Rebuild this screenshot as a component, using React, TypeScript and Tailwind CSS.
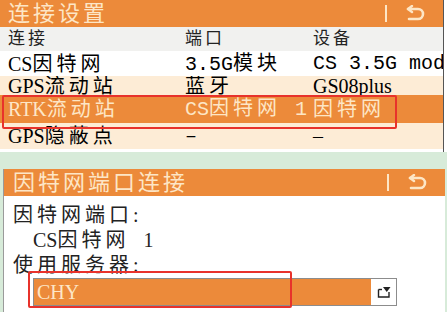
import React from "react";

const serif = "font-['Liberation_Serif','Noto_Sans_CJK_SC',serif]";
const mono = "font-['Liberation_Mono','Noto_Sans_CJK_SC',monospace]";

// splits a label into CJK / latin runs so the CJK glyphs get the wide pitch of the device font
function Mix({ s, m }: { s: string; m?: boolean }) {
  const parts = s.split(/([\u3000-\u9fff\uff00-\uffef]+|\s+)/).filter(Boolean);
  return (
    <>
      {parts.map((p, i) => {
        if (/^\s+$/.test(p)) return <span key={i} className="inline-block w-[0.7em]" />;
        if (/[\u3000-\u9fff\uff00-\uffef]/.test(p))
          return (
            <span key={i} className="tracking-[0.2em]">
              {p}
            </span>
          );
        return (
          <span key={i} className={m ? mono : ""}>
            {p}
          </span>
        );
      })}
    </>
  );
}

function ReturnIcon() {
  return (
    <svg width="22" height="18" viewBox="0 0 22 18" fill="none">
      <path d="M4 4 H14 a5 5 0 0 1 0 10 H5" stroke="#fde6c6" strokeWidth="2.6" strokeLinecap="round" />
      <path d="M8 1 L4 4 L8 7" stroke="#fde6c6" strokeWidth="2.4" strokeLinecap="round" strokeLinejoin="round" />
    </svg>
  );
}

function TitleBar({ title, pad }: { title: string; pad: string }) {
  return (
    <div className={`flex items-center h-[27px] bg-[#ec8a3a] ${pad}`}>
      <span className="flex-1 text-[22px] leading-none tracking-[3px] text-[#fde6c6]">{title}</span>
      <div className="w-[2px] h-[17px] bg-[#fde6c6]" />
      <div className="w-[56px] flex justify-center">
        <ReturnIcon />
      </div>
    </div>
  );
}

const rows = [
  { a: "CS因特网", b: "3.5G模块", c: "CS 3.5G mod", bg: "bg-white", h: "h-[25px]" },
  { a: "GPS流动站", b: "蓝牙", c: "GS08plus", bg: "bg-[#fdecd6]", h: "h-[19px]" },
  { a: "RTK流动站", b: "CS因特网 1", c: "因特网", bg: "bg-[#ec8a3a] text-[#fde6c6]", h: "h-[28px]" },
  { a: "GPS隐蔽点", b: "–", c: "–", bg: "bg-[#fdecd6]", h: "h-[26px]" },
];

export default function App() {
  return (
    <div className={`relative w-[447px] h-[312px] overflow-hidden bg-[#d7ebd9] ${serif}`}>
      {/* connection settings */}
      <div className="w-[447px] bg-white">
        <div className="w-[444px] border-r border-[#555]">
          <TitleBar title="连接设置" pad="pl-[8px]" />
          <div className="flex items-center h-[24px] bg-[#f1f1ef] text-[17px] tracking-[3px] text-[#222]">
            <span className="w-[185px] pl-[8px]">连接</span>
            <span className="w-[128px]">端口</span>
            <span>设备</span>
          </div>
          {rows.map((r) => (
            <div
              key={r.a}
              className={`flex items-center ${r.h} ${r.bg} text-[20px] leading-none whitespace-nowrap overflow-hidden`}
            >
              <span className="w-[185px] shrink-0 pl-[8px]">
                <Mix s={r.a} />
              </span>
              <span className="w-[128px] shrink-0">
                <Mix s={r.b} m />
              </span>
              <span className={r.c.startsWith("CS ") ? `${mono} whitespace-pre` : ""}>
                {r.c.startsWith("CS ") ? r.c : <Mix s={r.c} />}
              </span>
            </div>
          ))}
          <div className="h-[3px] bg-white" />
        </div>
      </div>

      {/* red highlight on the RTK row */}
      <div className="absolute left-[2px] top-[95px] w-[395px] h-[34px] border-2 border-[#e8322b] rounded-[2px]" />

      {/* internet port connection */}
      <div className="mt-[17px] ml-[3px] w-[442px] h-[200px] bg-white border-l border-[#9a9a9a]">
        <TitleBar title="因特网端口连接" pad="pl-[9px]" />
        <div className="flex flex-col pl-[9px] pt-[6px] text-[20px] text-[#222] leading-none">
          <span className="h-[25px] flex items-center">
            <Mix s="因特网端口:" />
          </span>
          <span className="h-[25px] flex items-center pl-[20px]">
            <Mix s="CS因特网 1" />
          </span>
          <span className="h-[25px] flex items-center">
            <Mix s="使用服务器:" />
          </span>
          <div className="mt-[1px] ml-[20px] w-[364px] h-[28px] flex border border-[#8c8c8c]">
            <div className="flex-1 bg-[#ec8a3a] flex items-center pl-[3px] text-[#fde6c6] text-[20px]">CHY</div>
            <div className="w-[25px] flex items-center justify-center bg-white">
              <svg width="14" height="12" viewBox="0 0 14 12">
                <path d="M1.5 3.5 V11 H12 V6" stroke="#222" strokeWidth="1.4" fill="none" />
                <path d="M1.5 3.5 H5" stroke="#222" strokeWidth="1.4" />
                <path d="M6 1 H13.5 L9.75 6 Z" fill="#222" />
              </svg>
            </div>
          </div>
          <span className="mt-[4px] h-[25px] flex items-center">
            <Mix s="服务器连接状态" />
          </span>
        </div>
      </div>

      {/* red highlight on the server field */}
      <div className="absolute left-[28px] top-[271px] w-[264px] h-[37px] border-2 border-[#e8322b] rounded-[2px]" />
    </div>
  );
}
